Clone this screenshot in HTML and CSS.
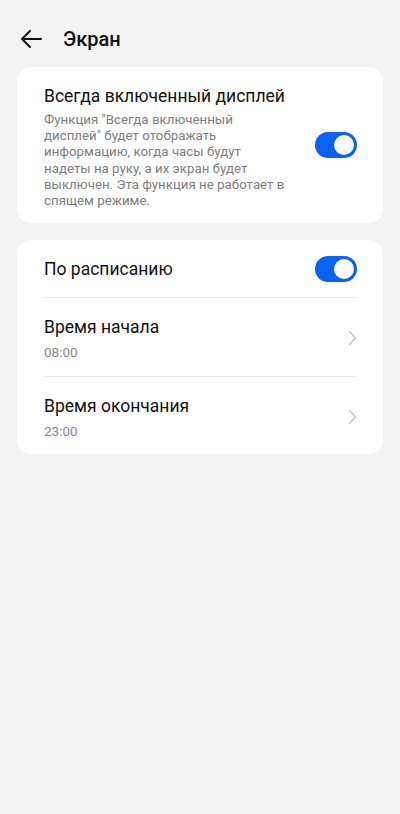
FILE: index.html
```html
<!DOCTYPE html>
<html>
<head>
  <meta charset="utf-8">
  <title>Экран</title>
  <link rel="stylesheet" href="styles.css">
</head>
<body>
  <div class="header">
    <svg class="back" width="22" height="18" viewBox="0 0 22 18">
      <path d="M21 9H2M10 1L2 9l8 8" fill="none" stroke="#111" stroke-width="2" stroke-linecap="round" stroke-linejoin="round"/>
    </svg>
    <h1>Экран</h1>
  </div>

  <div class="card">
    <div class="row aod">
      <div class="text">
        <div class="title">Всегда включенный дисплей</div>
        <div class="desc">Функция "Всегда включенный дисплей" будет отображать информацию, когда часы будут надеты на руку, а их экран будет выключен. Эта функция не работает в спящем режиме.</div>
      </div>
      <div class="toggle"><span class="knob"></span></div>
    </div>
  </div>

  <div class="card">
    <div class="row simple">
      <div class="title">По расписанию</div>
      <div class="toggle"><span class="knob"></span></div>
    </div>
    <div class="row item">
      <div class="text">
        <div class="title">Время начала</div>
        <div class="sub">08:00</div>
      </div>
      <svg class="chev" width="9" height="16" viewBox="0 0 9 16"><path d="M1.5 1.5L7.5 8l-6 6.5" fill="none" stroke="#c6c6c6" stroke-width="1.6" stroke-linecap="round" stroke-linejoin="round"/></svg>
    </div>
    <div class="row item">
      <div class="text">
        <div class="title">Время окончания</div>
        <div class="sub">23:00</div>
      </div>
      <svg class="chev" width="9" height="16" viewBox="0 0 9 16"><path d="M1.5 1.5L7.5 8l-6 6.5" fill="none" stroke="#c6c6c6" stroke-width="1.6" stroke-linecap="round" stroke-linejoin="round"/></svg>
    </div>
  </div>
</body>
</html>
```

FILE: styles.css
```css
body {
  margin: 0;
  background-color: #f3f3f3;
  color: #111;
  font-family: Roboto, "Noto Sans", sans-serif;
}

/* top bar */
.header {
  display: flex;
  align-items: center;
  padding: 11px 0 0 20px;
  box-sizing: border-box;
  height: 67px;
}

.header h1 {
  margin: 0 0 0 21px;
  font-size: 20px;
  font-weight: 500;
  line-height: 24px;
}

/* cards */
.card {
  background-color: #fff;
  border-radius: 14px;
  margin: 0 17px 17px;
  padding: 0 26px 0 27px;
}

.row {
  display: flex;
  align-items: center;
}

.row .text {
  flex: 1;
}

.title {
  font-size: 17.5px;
  line-height: 24px;
}

.aod {
  padding: 17px 0 14px;
}

.aod .toggle {
  margin-bottom: 3px;
}

.desc {
  margin-top: 4px;
  width: 246px;
  font-size: 13.3px;
  line-height: 16.2px;
  color: #7e7e7e;
}

.simple {
  justify-content: space-between;
  height: 57px;
  border-bottom: 1px solid #ebebeb;
}

.simple .title {
  flex: 1;
}

.item {
  padding: 17px 0 15px;
}

.item + .item {
  border-top: 1px solid #ebebeb;
  padding-bottom: 14px;
}

.sub {
  margin-top: 4px;
  font-size: 13.5px;
  line-height: 18px;
  color: #888;
}

/* switch */
.toggle {
  position: relative;
  width: 42px;
  height: 26px;
  border-radius: 13px;
  background-color: #0a62f2;
  flex: none;
}

.knob {
  position: absolute;
  top: 3px;
  right: 3px;
  width: 20px;
  height: 20px;
  border-radius: 50%;
  background-color: #fff;
}
```
